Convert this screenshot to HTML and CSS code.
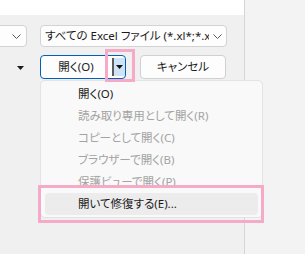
FILE: index.html
```html
<!DOCTYPE html>
<html lang="ja">
<head>
<meta charset="utf-8">
<link rel="stylesheet" href="styles.css">
</head>
<body>
<div class="window">
  <div class="main">
    <div class="top"></div>
    <div class="rest">
      <div class="row combos">
        <div class="combo combo-left">
          <svg class="chev" width="9" height="5" viewBox="0 0 9 5"><path d="M0.5 0.5 L4.5 4.5 L8.5 0.5" fill="none" stroke="#5a5a5a" stroke-width="1"/></svg>
        </div>
        <div class="combo combo-right">
          <span class="combo-text">すべての Excel ファイル (*.xl*;*.xlsx</span>
          <svg class="chev" width="9" height="5" viewBox="0 0 9 5"><path d="M0.5 0.5 L4.5 4.5 L8.5 0.5" fill="none" stroke="#5a5a5a" stroke-width="1"/></svg>
        </div>
      </div>
      <div class="row buttons">
        <div class="tools-arrow"><svg width="7" height="4" viewBox="0 0 7 4"><path d="M0 0 H7 L3.5 4 Z" fill="#1b1b1b"/></svg></div>
        <div class="btn btn-open">
          <span class="btn-label">開く(O)</span>
          <span class="btn-drop"><svg width="7" height="4" viewBox="0 0 7 4"><path d="M0 0 H7 L3.5 4 Z" fill="#111"/></svg></span>
        </div>
        <div class="btn btn-cancel"><span class="btn-label">キャンセル</span></div>
      </div>
    </div>
  </div>
  <div class="side"></div>

  <div class="menu">
    <div class="item">開く(O)</div>
    <div class="item disabled">読み取り専用として開く(R)</div>
    <div class="item disabled">コピーとして開く(C)</div>
    <div class="item disabled">ブラウザーで開く(B)</div>
    <div class="item disabled">保護ビューで開く(P)</div>
    <div class="item hover">開いて修復する(E)...</div>
  </div>

  <div class="mark mark-drop"></div>
  <div class="mark mark-item"></div>
</div>
</body>
</html>
```

FILE: styles.css
```css
html, body {
  margin: 0;
  padding: 0;
}
body {
  width: 305px;
  height: 254px;
  overflow: hidden;
  font-family: "Noto Sans", "Noto Sans CJK JP", sans-serif;
  font-feature-settings: "palt";
  font-size: 11.5px;
  color: #1b1b1b;
}
.window {
  position: relative;
  display: flex;
  width: 305px;
  height: 254px;
}
.main {
  width: 244px;
  border-right: 1px solid #d6d6d6;
  display: flex;
  flex-direction: column;
}
.side {
  flex: 1;
  background: #f3f3f3;
}
.top {
  height: 15px;
  background: #ffffff;
}
.rest {
  flex: 1;
  background: #f0f0f0;
  padding-top: 10px;
}
.row {
  display: flex;
  align-items: center;
}
.combos {
  height: 22px;
}
.combo {
  box-sizing: border-box;
  height: 22px;
  background: #fdfdfd;
  border: 1px solid #d3d3d3;
  border-radius: 4px;
  display: flex;
  align-items: center;
  overflow: hidden;
}
.combo-left {
  width: 32px;
  margin-left: -5px;
  justify-content: flex-end;
  padding-right: 5px;
}
.combo-right {
  width: 187px;
  margin-left: 13px;
  padding-left: 4px;
  padding-right: 4px;
}
.combo-text {
  flex: 1;
  min-width: 0;
  white-space: nowrap;
  overflow: hidden;
  line-height: 20px;
}
.chev {
  flex: none;
  margin-left: 4px;
}
.buttons {
  margin-top: 8px;
  height: 24px;
}
.tools-arrow {
  width: 40px;
  display: flex;
  justify-content: flex-start;
  padding-left: 17px;
  box-sizing: border-box;
  height: 24px;
  align-items: center;
}
.tools-arrow svg {
  display: block;
  margin-top: 1px;
}
.btn {
  box-sizing: border-box;
  height: 24px;
  width: 86px;
  border-radius: 4px;
  background: #fdfdfd;
  border: 1px solid #d0d0d0;
  display: flex;
  align-items: stretch;
  overflow: hidden;
}
.btn-open {
  border-color: #005fb8;
}
.btn-cancel {
  margin-left: 14px;
  justify-content: center;
}
.btn-label {
  flex: 1;
  text-align: center;
  line-height: 22px;
}
.btn-open .btn-label {
  padding-right: 1px;
}
.btn-drop {
  width: 13px;
  background: #cfe3f6;
  border-left: 2px solid #5c5c5c;
  display: flex;
  align-items: center;
  justify-content: center;
  box-sizing: border-box;
  margin: 2px 0;
}
.btn-drop svg {
  display: block;
}
.menu {
  position: absolute;
  left: 40px;
  top: 80px;
  width: 223px;
  box-sizing: border-box;
  padding: 2px 0;
  background: #f9f9f9;
  border: 1px solid #e3e3e3;
  border-radius: 5px;
}
.item {
  height: 22px;
  line-height: 22px;
  margin: 0 4px;
  padding-left: 33px;
  border-radius: 4px;
  white-space: nowrap;
  color: #1b1b1b;
}
.item.disabled {
  color: #a3a3a3;
}
.item.hover {
  background: #ececec;
}
.mark {
  position: absolute;
  border: 3px solid #f5aac8;
  box-sizing: border-box;
}
.mark-drop {
  left: 105px;
  top: 49px;
  width: 30px;
  height: 33px;
}
.mark-item {
  left: 38px;
  top: 185px;
  width: 226px;
  height: 38px;
}
```
